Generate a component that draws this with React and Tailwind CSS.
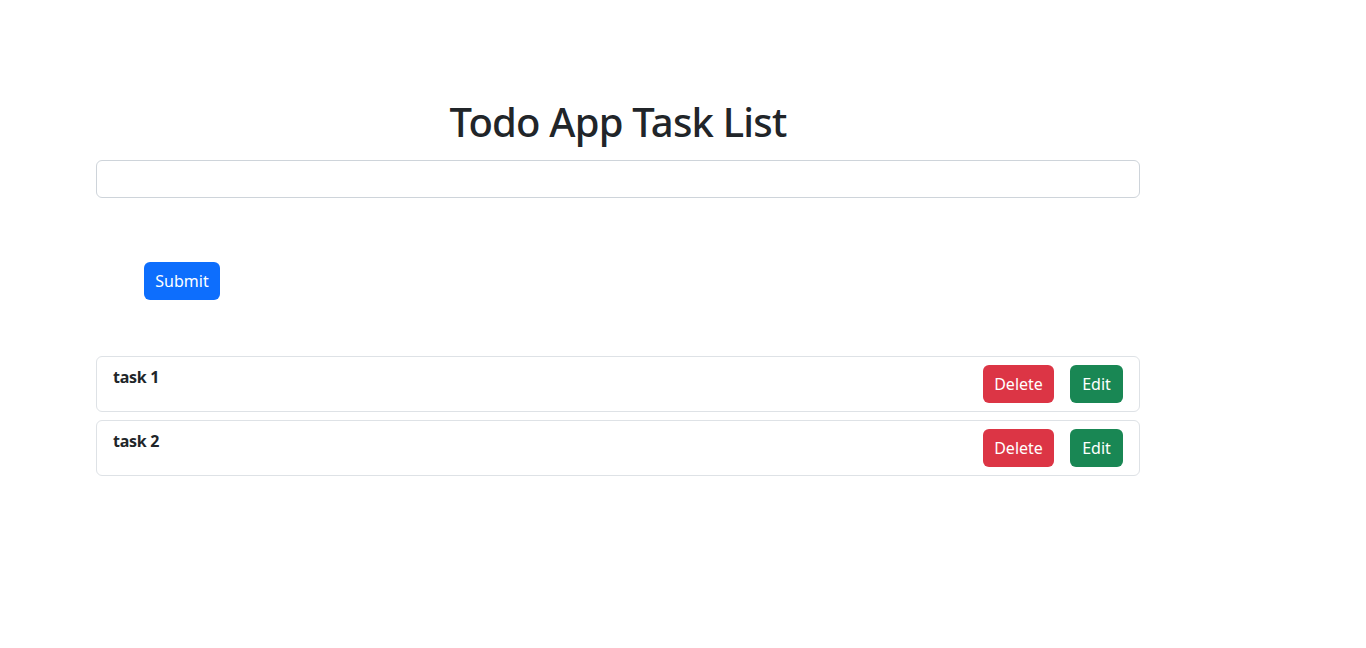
export default function App() {
  const tasks = ["task 1", "task 2"];
  return (
    <div className="min-h-screen bg-white text-[#212529]" style={{ fontFamily: '"Noto Sans", "Open Sans", sans-serif' }}>
      <div className="ml-[96px] w-[1044px] pt-[98px]">
        <h1 className="text-center text-[40px] leading-[48px] font-medium tracking-[-0.8px]">Todo App Task List</h1>
        <input
          type="text"
          className="mt-[14px] block h-[38px] w-full rounded-[6px] border border-[#ced4da] px-3 text-base outline-none"
        />
        <div className="mt-[64px] pl-[48px]">
          <button className="h-[38px] w-[76px] rounded-[6px] bg-[#0d6efd] text-base leading-6 text-white">Submit</button>
        </div>
        <ul className="mt-[56px] flex flex-col gap-[8px]">
          {tasks.map((t) => (
            <li key={t} className="flex items-start justify-between rounded-[6px] border border-[#dee2e6] py-[8px] pl-[16px] pr-[16px]">
              <span className="text-base leading-6 font-bold tracking-[-0.3px]">{t}</span>
              <div className="flex gap-[16px]">
                <button className="h-[38px] w-[71px] rounded-[6px] bg-[#dc3545] text-base text-white">Delete</button>
                <button className="h-[38px] w-[53px] rounded-[6px] bg-[#198754] text-base text-white">Edit</button>
              </div>
            </li>
          ))}
        </ul>
      </div>
    </div>
  );
}
